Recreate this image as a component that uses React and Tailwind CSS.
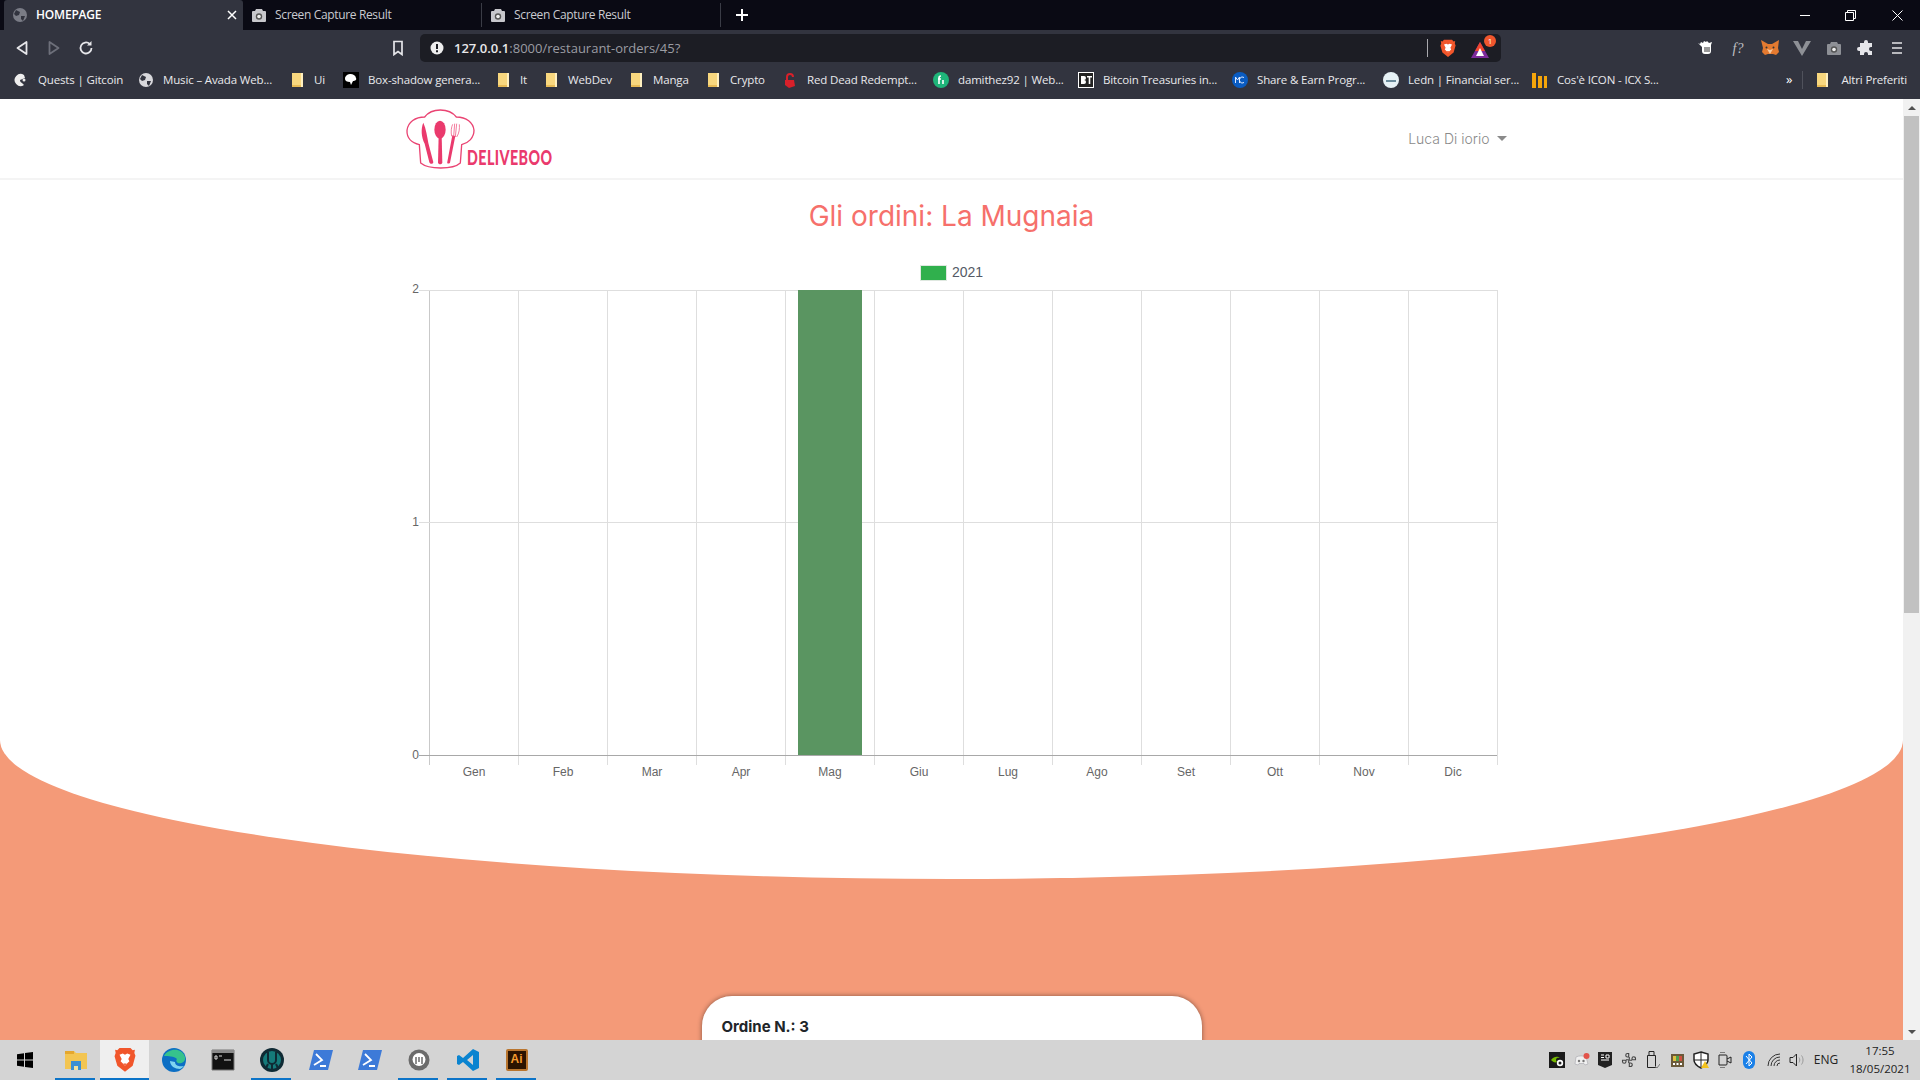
import React from "react";

const Folder = () => (
  <svg width="14" height="16" viewBox="0 0 14 16" className="shrink-0"><path d="M1 1h11v14H1z" fill="#f8d77e" /><path d="M10 1h2v14h-2z" fill="#fff0c0" /><path d="M1 13h9v2H1z" fill="#e8bb55" /></svg>
);
const Globe = ({ c = "#d8d8dc" }) => (
  <svg width="16" height="16" viewBox="0 0 16 16" className="shrink-0"><circle cx="8" cy="8" r="7" fill={c} /><path d="M4 3l4 2-1 3-3 1-2-2zM9 9l4 0-2 5-2-2z" fill="#32343f" /></svg>
);
const Camera = ({ c = "#c7c7cc" }) => (
  <svg width="16" height="16" viewBox="0 0 16 16" className="shrink-0"><path d="M5 2h6l1 2h2a1 1 0 0 1 1 1v9a1 1 0 0 1-1 1H2a1 1 0 0 1-1-1V5a1 1 0 0 1 1-1h2z" fill={c} /><circle cx="8" cy="9.5" r="3.2" fill="#555" /><circle cx="8" cy="9.5" r="1.8" fill="#eee" /></svg>
);
const Brave = ({ s = 18 }) => (
  <svg width={s} height={s * 1.15} viewBox="0 0 20 23" className="shrink-0">
    <path d="M5 1h10l2 2 2-.5-.5 3 1 2.500L17 17l-7 5.500L3 17 .5 8.500l1-3L1 2.500 3 3z" fill="#f1562b" />
    <path d="M5 7l3-1 2 1 2-1 3 1-2 4 1 2-3 3-1 1-1-1-3-3 1-2z" fill="#fff" />
    <path d="M8.500 15h3L10 17z" fill="#f1562b" />
  </svg>
);

const favicons = {
  quests: <svg width="16" height="16" viewBox="0 0 16 16" className="shrink-0"><path d="M11 3a6 6 0 1 0 0 10l-2-2a3 3 0 0 1-2-3l5-2z" fill="#eee" /><circle cx="11" cy="8" r="1.500" fill="#eee" /></svg>,
  box: <svg width="16" height="16" viewBox="0 0 16 16" className="shrink-0"><path d="M0 0h16v16H0z" fill="#000" /><path d="M2 7a5 4 0 0 1 11-1c1 2-1 3-3 3l-2 4-1-3C4 10 2 9 2 7z" fill="#fff" /></svg>,
  red: <svg width="16" height="16" viewBox="0 0 16 16" className="shrink-0"><path d="M5 8V5a3 3 0 0 1 6 0" stroke="#d8202a" strokeWidth="2" fill="none" /><path d="M3 8h9l1 6-6 2-4-3z" fill="#d8202a" /></svg>,
  dami: <svg width="16" height="16" viewBox="0 0 16 16" className="shrink-0"><circle cx="8" cy="8" r="8" fill="#1fb57a" /><path d="M6 12V6a2 2 0 0 1 2-2M5 7h3M10 12V8" stroke="#fff" strokeWidth="1.600" fill="none" /></svg>,
  bt: <svg width="16" height="16" viewBox="0 0 16 16" className="shrink-0"><path d="M0 0h16v16H0z" fill="#fff" /><path d="M1 1h14v14H1z" fill="#222" /><path d="M3 4h3a1.500 1.500 0 0 1 0 4 1.500 1.500 0 0 1 0 4H3zM9 4h5v1.500h-1.700V12h-1.600V5.500H9z" fill="#fff" /></svg>,
  share: <svg width="16" height="16" viewBox="0 0 16 16" className="shrink-0"><circle cx="8" cy="8" r="8" fill="#0a5cc2" /><path d="M3.500 11V5l2 3 2-3v6M12 5.500a3 3 0 1 0 0 5" stroke="#dce8ff" strokeWidth="1" fill="none" /></svg>,
  ledn: <svg width="16" height="16" viewBox="0 0 16 16" className="shrink-0"><circle cx="8" cy="8" r="8" fill="#e6f1f5" /><path d="M3 9h10" stroke="#6a8b9b" strokeWidth="2" /></svg>,
  icon: <svg width="16" height="16" viewBox="0 0 16 16" className="shrink-0"><path d="M0 1h4v15H0z" fill="#f5a50a" /><path d="M6 4h4v12H6z" fill="#f5a50a" /><path d="M12 4h3v12h-3z" fill="#f5a50a" /></svg>,
};

const bookmarks = [
  { w: "w-[125px]", i: favicons.quests, t: "Quests | Gitcoin" },
  { w: "w-[153px]", i: <Globe />, t: "Music – Avada Web..." },
  { w: "w-[52px]", i: <Folder />, t: "Ui" },
  { w: "w-[154px]", i: favicons.box, t: "Box-shadow genera..." },
  { w: "w-[48px]", i: <Folder />, t: "It" },
  { w: "w-[85px]", i: <Folder />, t: "WebDev" },
  { w: "w-[77px]", i: <Folder />, t: "Manga" },
  { w: "w-[75px]", i: <Folder />, t: "Crypto" },
  { w: "w-[151px]", i: favicons.red, t: "Red Dead Redempt..." },
  { w: "w-[145px]", i: favicons.dami, t: "damithez92 | Web..." },
  { w: "w-[154px]", i: favicons.bt, t: "Bitcoin Treasuries in..." },
  { w: "w-[151px]", i: favicons.share, t: "Share & Earn Progr..." },
  { w: "w-[149px]", i: favicons.ledn, t: "Ledn | Financial ser..." },
  { w: "w-[230px]", i: favicons.icon, t: "Cos'è ICON - ICX S..." },
];

function Chrome() {
  return (
    <div className="shrink-0 font-['Open_Sans','Noto_Sans',sans-serif]">
      <div className="h-[30px] bg-[#0a0a14] flex items-center text-[12px] text-[#c9cad0]">
        <div className="ml-[4px] w-[239px] h-full bg-[#32343f] rounded-t-[3px] flex items-center pl-[8px] pr-[6px] text-white font-semibold">
          <Globe c="#7a7c86" />
          <span className="ml-[8px] flex-1 tracking-[-0.2px]">HOMEPAGE</span>
          <svg width="10" height="10" viewBox="0 0 10 10"><path d="M1 1l8 8M9 1l-8 8" stroke="#fff" strokeWidth="1.500" /></svg>
        </div>
        <div className="w-[239px] h-[24px] flex items-center pl-[8px] gap-[8px] border-r border-[#3a3c46]"><Camera /><span className="tracking-[-0.35px]">Screen Capture Result</span></div>
        <div className="w-[239px] h-[24px] flex items-center pl-[8px] gap-[8px] border-r border-[#3a3c46]"><Camera /><span className="tracking-[-0.35px]">Screen Capture Result</span></div>
        <svg width="12" height="12" viewBox="0 0 12 12" className="ml-[15px]"><path d="M6 0v12M0 6h12" stroke="#fff" strokeWidth="2" /></svg>
        <div className="ml-auto flex items-center">
          <div className="w-[10px] h-px bg-white mr-[35px]" />
          <svg width="11" height="11" viewBox="0 0 11 11" className="mr-[36px]"><path d="M.5 2.500h8v8h-8zM2.500 2.500v-2h8v8h-2" stroke="#fff" fill="none" /></svg>
          <svg width="11" height="11" viewBox="0 0 11 11" className="mr-[17px]"><path d="M.5.5l10 10M10.500.500l-10 10" stroke="#fff" /></svg>
        </div>
      </div>
      <div className="h-[36px] bg-[#32343f] flex items-center">
        <svg width="14" height="16" viewBox="0 0 14 16" className="ml-[15px]"><path d="M11.500 2v12L2.500 8z" stroke="#e6e6ea" strokeWidth="1.800" fill="none" strokeLinejoin="round" /></svg>
        <svg width="14" height="16" viewBox="0 0 14 16" className="ml-[18px]"><path d="M2.500 2v12l9-6z" stroke="#6d6f7a" strokeWidth="1.800" fill="none" strokeLinejoin="round" /></svg>
        <svg width="16" height="16" viewBox="0 0 16 16" className="ml-[17px]"><path d="M13.500 8a5.500 5.500 0 1 1-1.800-4.100" stroke="#e6e6ea" strokeWidth="1.800" fill="none" /><path d="M13.500 1v4.500H9z" fill="#e6e6ea" /></svg>
        <svg width="12" height="16" viewBox="0 0 12 16" className="ml-[298px]"><path d="M2 1.500h8v13l-4-3-4 3z" stroke="#e6e6ea" strokeWidth="1.700" fill="none" /></svg>
        <div className="ml-[16px] w-[1081px] h-[28px] bg-[#1c1d24] rounded-[5px] flex items-center pl-[10px] pr-[8px]">
          <svg width="14" height="14" viewBox="0 0 14 14" className="shrink-0"><circle cx="7" cy="7" r="6.500" fill="#eee" /><path d="M6 3h2v5H6zM6 9.300h2v2H6z" fill="#1c1d24" /></svg>
          <span className="ml-[10px] text-[13px] text-[#e8e8ea] font-semibold mt-[1px]">127.0.0.1<span className="text-[#9b9ca3] font-normal">:8000/restaurant-orders/45?</span></span>
          <div className="ml-auto w-px h-[18px] bg-[#a9a9ae]" />
          <div className="ml-[12px]"><Brave s={16} /></div>
          <div className="ml-[15px] relative w-[22px] h-[20px]">
            <svg width="18" height="16" viewBox="0 0 18 16" className="absolute left-0 bottom-0"><path d="M9 0l9 16H0z" fill="#7c2a9a" /><path d="M9 0l5 9H4z" fill="#f0462d" /><path d="M9 6l4 8H5z" fill="#fff" /></svg>
            <div className="absolute -top-[3px] right-[-3px] w-[12px] h-[12px] rounded-full bg-[#f0562d] text-white text-[8px] leading-[12px] text-center">1</div>
          </div>
        </div>
        <div className="ml-auto flex items-center pr-[17px]">
          <svg width="18" height="16" viewBox="0 0 18 16" className="mr-[14px]"><path d="M1 3l2 1 1-2 2 1 1-2 2 1 1-1 2 2 3-1-1 3v6a3 3 0 0 1-3 3H8a3 3 0 0 1-3-3V7z" fill="#fff" /><path d="M8 7v5M10 7v5M12 7v5" stroke="#333" /></svg>
          <span className="w-[18px] mr-[14px] text-center text-[14px] italic text-[#c0c0c4] font-['Liberation_Serif',serif]">f?</span>
          <svg width="18" height="18" viewBox="0 0 18 18" className="mr-[14px]"><path d="M0 1l7 4h4l7-4-1 8 1 4-3 3-3-1H7l-3 1-3-3 1-4z" fill="#e47a30" /><path d="M6 10l3 5 3-5-3 1z" fill="#f5c9a0" /><circle cx="5.500" cy="8.500" r="1" fill="#333" /><circle cx="12.500" cy="8.500" r="1" fill="#333" /></svg>
          <svg width="18" height="16" viewBox="0 0 18 16" className="mr-[14px]"><path d="M0 1h5l4 8 4-8h5L9 16z" fill="#8e9096" /></svg>
          <div className="mr-[14px] w-[18px] flex justify-center"><Camera c="#8e9096" /></div>
          <svg width="18" height="18" viewBox="0 0 18 18" className="mr-[16px]"><path d="M7 3a2 2 0 0 1 4 0v1h4v4h-1a2 2 0 0 0 0 4h1v4h-4v-1a2 2 0 0 0-4 0v1H3v-4H2a2 2 0 0 1 0-4h1V4h4z" fill="#e6e6ea" /></svg>
          <svg width="12" height="14" viewBox="0 0 12 14"><path d="M1 2h10M1 7h10M1 12h10" stroke="#b8b8bd" strokeWidth="1.800" /></svg>
        </div>
      </div>
      <div className="h-[33px] bg-[#32343f] flex items-center pl-[13px] pb-[5px] text-[11.5px] text-[#e9e9ec]">
        {bookmarks.map((b) => (
          <div key={b.t} className={`${b.w} flex items-center gap-[9px] shrink-0 whitespace-nowrap`}>
            {b.i}
            <span className="tracking-[-0.15px]">{b.t}</span>
          </div>
        ))}
        <span className="ml-[24px] text-[13px] text-white">»</span>
        <div className="w-px h-[18px] bg-[#50525c] ml-[10px] mr-[13px]" />
        <Folder />
        <span className="ml-[11px] tracking-[-0.15px]">Altri Preferiti</span>
      </div>
    </div>
  );
}

function Logo() {
  return (
    <div className="relative w-[148px] h-[60px] ml-[9px]">
      <svg width="69" height="61" viewBox="44 26 207 183" className="block">
        <path d="M88 188 L84 133 C60 128 46 112 47 90 C50 65 72 50 100 50 C112 34 130 29 147 29 C166 29 184 36 195 50 C225 50 246 66 248 90 C248 112 232 128 211 133 L207 188 C185 208 112 208 88 188 Z" fill="none" stroke="#ea4473" strokeWidth="4" />
        <path d="M96 67 C104 85 108 110 111 128 L126 186 C124 192 117 192 114 186 L100 130 C90 110 88 85 96 67 Z" fill="#ea3a6d" />
        <ellipse cx="146" cy="88" rx="17" ry="27" fill="#ea3a6d" />
        <path d="M142 105h9l2 82c-3 6-10 6-13 0z" fill="#ea3a6d" />
        <path d="M183 105 L192 107 L176 187 C172 192 166 190 168 184 Z" fill="#ea3a6d" />
        <path d="M181 108 C178 95 180 80 184 72 M187 108 L190 70 M192 110 L196 70 M196 110 C204 98 205 85 204 72" stroke="#f0638c" strokeWidth="2.500" fill="none" />
      </svg>
      <span className="absolute left-[61px] top-[37px] text-[21px] leading-[22px] text-[#ea3a6d] font-black tracking-[0.6px] font-['Lato','Roboto',sans-serif] scale-x-[0.68] origin-left">DELIVEBOO</span>
    </div>
  );
}

const months = ["Gen", "Feb", "Mar", "Apr", "Mag", "Giu", "Lug", "Ago", "Set", "Ott", "Nov", "Dic"];
const gridXs = Array.from({ length: 13 }, (_, i) => 429.5 + i * 89);

function Chart() {
  return (
    <svg viewBox="396 256 1111 530" className="block w-[1111px] h-[530px] mx-auto mt-[20px] font-['Liberation_Sans',Arial,sans-serif]">
      <rect x="920.500" y="265.500" width="26" height="15" fill="#30b04d" stroke="#dfe8e0" />
      <text x="952" y="276.500" fontSize="14" fill="#555a66">2021</text>
      {gridXs.map((x, i) => (
        <line key={x} x1={x} x2={x} y1="290" y2="765" stroke={i === 0 ? "#c9c9c9" : "#dedede"} />
      ))}
      {[290.5, 522.5, 755.5].map((y, i) => (
        <line key={y} x1="419" x2="1497" y1={y} y2={y} stroke={i === 2 ? "#a8a8a8" : "#dedede"} />
      ))}
      <rect x="798" y="290" width="64" height="465" fill="#5a9561" />
      {[["2", 292.5], ["1", 525.5], ["0", 758.5]].map(([t, y]) => (
        <text key={t} x="419" y={y} textAnchor="end" fontSize="12" fill="#666">{t}</text>
      ))}
      {months.map((m, i) => (
        <text key={m} x={474 + i * 89} y="776" textAnchor="middle" fontSize="12" fill="#666">{m}</text>
      ))}
    </svg>
  );
}

function Page() {
  return (
    <div className="flex-1 min-w-0 bg-[#f49a78] overflow-hidden">
      <div className="h-[780px] bg-white rounded-bl-[951.5px_139px] rounded-br-[951.5px_139px]">
        <nav className="h-[81px] border-b-2 border-[#f4f4f4]">
          <div className="w-[1110px] mx-auto flex items-center justify-between h-full">
            <Logo />
            <div className="flex items-center gap-[7px] text-[14px] text-[#8a8a8a] font-['Inter',sans-serif] pr-0 font-light">
              <span>Luca Di iorio</span>
              <span className="w-0 h-0 border-x-[5px] border-x-transparent border-t-[5px] border-t-[#8a8a8a]" />
            </div>
          </div>
        </nav>
        <h1 className="mt-[16px] h-[40px] text-center text-[28px] leading-[40px] text-[#f6706b] font-['Inter',sans-serif]">Gli ordini: La Mugnaia</h1>
        <Chart />
      </div>
      <div className="mt-[117px] mx-auto w-[500px] h-[120px] bg-white rounded-[30px] shadow-[0_0_5px_rgba(0,0,0,0.45)] pl-[20px] pt-[20px] text-[15px] leading-[22px] font-bold text-[#212529] font-['Inter',sans-serif]">
        Ordine N.: 3
      </div>
    </div>
  );
}

function Scrollbar() {
  return (
    <div className="w-[17px] shrink-0 bg-[#f1f1f1] flex flex-col items-center justify-between relative">
      <div className="w-full">
        <div className="h-[17px] flex items-center justify-center"><span className="w-0 h-0 border-x-[4px] border-x-transparent border-b-[4px] border-b-[#505050]" /></div>
        <div className="mx-auto w-[15px] h-[497px] bg-[#c1c1c1]" />
      </div>
      <div className="h-[17px] flex items-center justify-center"><span className="w-0 h-0 border-x-[4px] border-x-transparent border-t-[4px] border-t-[#505050]" /></div>
    </div>
  );
}

const Task = ({ children, active, running }) => (
  <div className={`w-[49px] h-full flex items-center justify-center relative shrink-0 ${active ? "bg-[#efefef]" : ""}`}>
    {children}
    {running && <div className={`absolute bottom-0 h-[2px] bg-[#0c74c8] ${active ? "inset-x-0" : "left-[4px] right-[5px]"}`} />}
  </div>
);

const PS = () => (
  <svg width="24" height="22" viewBox="0 0 24 22"><path d="M5 1h19l-5 20H0z" fill="#3d7ad8" /><path d="M7 5l6 6-8 5M11 17h6" stroke="#fff" strokeWidth="1.800" fill="none" /></svg>
);

function Taskbar() {
  return (
    <div className="h-[40px] bg-[#d4d4d4] shrink-0 flex items-center font-['Open_Sans','Noto_Sans',sans-serif] text-[#222]">
      <Task>
        <svg width="16" height="16" viewBox="0 0 16 16"><path d="M0 2.200l7-1v6.300H0zM8 1l8-1v7.500H8zM0 8.500h7v6.300l-7-1zM8 8.500h8V16l-8-1z" fill="#000" /></svg>
      </Task>
      <div className="w-[2px] shrink-0" />
      <Task running>
        <svg width="24" height="24" viewBox="0 0 24 24"><path d="M1 3h9l2 2h11v16H1z" fill="#f3c552" /><path d="M1 3h9v3H1z" fill="#e5a72e" /><path d="M7 13h10v9H7z" fill="#3c90d3" /><path d="M10 18h4v4h-4z" fill="#f3e3a0" /></svg>
      </Task>
      <Task active running><Brave s={22} /></Task>
      <Task>
        <svg width="24" height="24" viewBox="0 0 24 24"><circle cx="12" cy="12" r="12" fill="#0c6fc4" /><path d="M2 8C6 0 20-1 23 9c1 5-4 7-7 6-2-1-2-3-1-4-3-3-9-3-13-3z" fill="#36c28c" /><path d="M8 13c0 5 5 8 10 8 2-1 3-2 4-3-4 1-9 0-9-4z" fill="#7fd4f0" /></svg>
      </Task>
      <Task>
        <svg width="24" height="24" viewBox="0 0 24 24"><path d="M1 2h22v20H1z" fill="#111" stroke="#777" /><path d="M1 2h22v3H1z" fill="#8a8a8a" /><path d="M4 8h2v3H4zM8 8h3M13 12h7" stroke="#ddd" fill="none" /></svg>
      </Task>
      <Task running>
        <svg width="24" height="24" viewBox="0 0 24 24"><circle cx="12" cy="12" r="12" fill="#0f2a34" /><circle cx="12" cy="12" r="9" fill="#157a7a" /><path d="M8 4v8a4 4 0 0 0 8 0V4M12 15v6M8 16l-2 4M16 16l2 4" stroke="#0f2a34" strokeWidth="2" fill="none" /></svg>
      </Task>
      <Task><PS /></Task>
      <Task><PS /></Task>
      <Task running>
        <svg width="22" height="22" viewBox="0 0 22 22"><circle cx="11" cy="11" r="10.500" fill="#6b6b6b" /><circle cx="11" cy="10.500" r="6.500" fill="#fff" /><path d="M8 8v7M14 8v7M11 8v5" stroke="#6b6b6b" strokeWidth="1.500" /></svg>
      </Task>
      <Task running>
        <svg width="24" height="24" viewBox="0 0 24 24"><path d="M17 1l6 3v16l-6 3-10-9-4 3-2-1V8l2-1 4 3zM17 7l-6 5 6 5z" fill="#0a84d0" /></svg>
      </Task>
      <Task running>
        <div className="w-[22px] h-[22px] bg-[#2b1300] border-2 border-[#b9752e] rounded-[2px] text-[12px] leading-[17px] text-center font-bold text-[#f59b2e] font-['Liberation_Sans',sans-serif]">Ai</div>
      </Task>
      <div className="ml-auto flex items-center h-full">
        <div className="w-[24px] flex justify-center"><svg width="16" height="16" viewBox="0 0 16 16"><path d="M0 0h16v16H0z" fill="#1a1a1a" /><path d="M2 8c3-4 7-4 9-2-4-1-5 2-3 4-2 1-4 0-6-2z" fill="#76b900" /><circle cx="11" cy="11" r="3.200" fill="#fff" /><circle cx="11" cy="11" r="1.500" fill="#222" /></svg></div>
        <div className="w-[24px] flex justify-center"><svg width="17" height="15" viewBox="0 0 17 15"><path d="M3 4c3-1.500 7-1.500 10 0l2 7-3 1-1-1.500H6L5 12l-3-1z" fill="#f0f0f0" stroke="#9a9aa2" strokeWidth="0.500" /><circle cx="6" cy="8" r="1.200" fill="#777" /><circle cx="10.500" cy="8" r="1.200" fill="#777" /><circle cx="13.500" cy="3" r="3" fill="#e2534a" /></svg></div>
        <div className="w-[24px] flex justify-center"><svg width="14" height="16" viewBox="0 0 14 16"><path d="M0 0h14v13l-7 3-7-3z" fill="#222" /><path d="M3 3h3M3 5.500h3M8 3h3v3H8zM3 8h8" stroke="#fff" /></svg></div>
        <div className="w-[24px] flex justify-center"><svg width="16" height="16" viewBox="0 0 16 16"><path d="M6.500 1.500a1.700 1.700 0 0 0 0 3.500h1.200V1.500zM9.500 14.500a1.700 1.700 0 0 0 0-3.500H8.300v3.500zM1.500 9.500a1.700 1.700 0 0 0 3.500 0V8.300H1.500zM14.500 6.500a1.700 1.700 0 0 0-3.500 0v1.200h3.500zM5 7.700h2.700M8.300 5V7.700M8.300 8.300H11M7.700 8.300V11" stroke="#444" strokeWidth="1.100" fill="none" /></svg></div>
        <div className="w-[24px] flex justify-center"><svg width="14" height="18" viewBox="0 0 14 18"><path d="M3 .5h5v4H3zM1.500 4.500h8v12h-8z" stroke="#222" fill="none" /><path d="M9 15l2 2 3-4" stroke="#777" fill="none" /></svg></div>
        <div className="w-[24px] flex justify-center"><svg width="13" height="13" viewBox="0 0 13 13"><path d="M0 0h13v13H0z" fill="#6b5a3a" /><path d="M2 2h3v5H2z" fill="#e0c040" /><path d="M5 2h3v5H5z" fill="#4fa04f" /><path d="M8 2h3v5H8z" fill="#d05040" /><path d="M2 9h2v2H2zM5.500 9h2v2h-2zM9 9h2v2H9z" fill="#fff" /></svg></div>
        <div className="w-[24px] flex justify-center"><svg width="16" height="18" viewBox="0 0 16 18"><path d="M8 1l7 2v6c0 4-3 6-7 8-4-2-7-4-7-8V3z" fill="#fff" stroke="#222" strokeWidth="1.500" /><path d="M8 1v16M1 9h14" stroke="#222" /><path d="M12 10l4 7H8z" fill="#f3c21d" /></svg></div>
        <div className="w-[24px] flex justify-center"><svg width="14" height="16" viewBox="0 0 14 16"><path d="M1 3h7a1 1 0 0 1 1 1v8a1 1 0 0 1-1 1H1zM9 7l4-2v6l-4-2M2 0h5M2 16h5" stroke="#222" fill="none" /></svg></div>
        <div className="w-[24px] flex justify-center"><svg width="12" height="18" viewBox="0 0 12 18"><rect width="12" height="18" rx="6" fill="#1a80e8" /><path d="M3 5l6 7-3 3V3l3 3-6 7" stroke="#fff" fill="none" /></svg></div>
        <div className="w-[24px] flex justify-center ml-[2px]"><svg width="16" height="14" viewBox="0 0 16 14"><path d="M1 13a12 12 0 0 1 12-12M4 13a9 9 0 0 1 9-9M7 13a6 6 0 0 1 6-6M10 13a3 3 0 0 1 3-3" stroke="#333" fill="none" /></svg></div>
        <div className="w-[20px] flex justify-center"><svg width="16" height="14" viewBox="0 0 16 14"><path d="M1 4.500h3l3.500-3.500v12L4 9.500H1z" stroke="#222" fill="none" /><path d="M10 4.500c1 1.500 1 3.500 0 5M12.500 2.500c2 2.500 2 6.500 0 9" stroke="#999" fill="none" /></svg></div>
        <span className="ml-[2px] w-[34px] text-[12px] text-center">ENG</span>
        <div className="ml-[6px] w-[62px] mr-[9px] text-[11.500px] leading-[18px] text-center">
          <div>17:55</div>
          <div>18/05/2021</div>
        </div>
      </div>
    </div>
  );
}

export default function App() {
  return (
    <div className="w-[1920px] h-[1080px] flex flex-col overflow-hidden bg-white">
      <Chrome />
      <div className="flex-1 min-h-0 flex">
        <Page />
        <Scrollbar />
      </div>
      <Taskbar />
    </div>
  );
}
